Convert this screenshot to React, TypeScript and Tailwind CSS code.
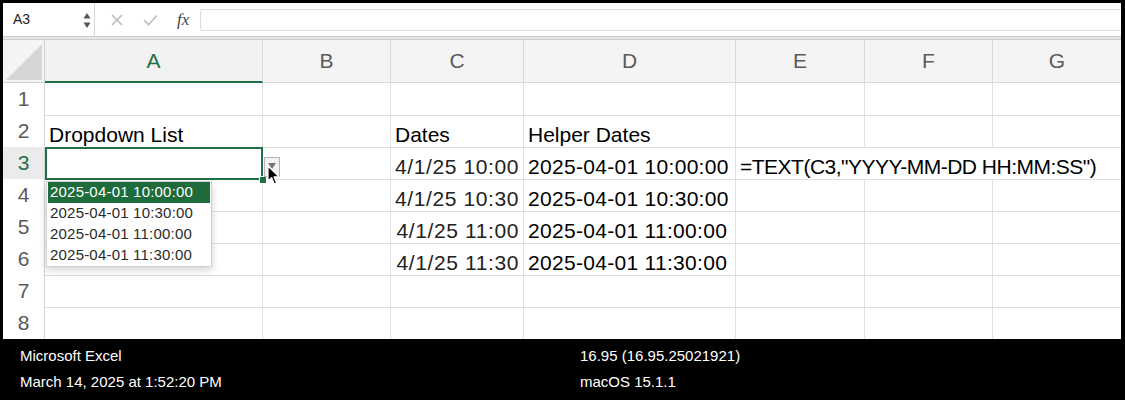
import * as React from 'react';

const COLS = 'grid grid-cols-[42px_218px_128px_133px_212px_129px_128px_129px]';
const LETTERS = ['A', 'B', 'C', 'D', 'E', 'F', 'G'];

type Cell = { text?: string; align?: 'left' | 'right'; cls?: string; noRight?: boolean };

const dateCell = (text: string): Cell => ({ text, align: 'right', cls: 'tracking-[0.6px]' });
const helperCell = (text: string): Cell => ({ text, cls: 'tracking-[0.3px]' });

const rows: Record<number, Cell[]> = {
  2: [{ text: 'Dropdown List' }, {}, { text: 'Dates' }, { text: 'Helper Dates' }, {}, {}, {}],
  3: [
    {},
    {},
    dateCell('4/1/25 10:00'),
    helperCell('2025-04-01 10:00:00'),
    { text: '=TEXT(C3,"YYYY-MM-DD HH:MM:SS")', cls: 'tracking-[-0.5px]', noRight: true },
    { noRight: true },
    {},
  ],
  4: [{}, {}, dateCell('4/1/25 10:30'), helperCell('2025-04-01 10:30:00'), {}, {}, {}],
  5: [{}, {}, dateCell('4/1/25 11:00'), helperCell('2025-04-01 11:00:00'), {}, {}, {}],
  6: [{}, {}, dateCell('4/1/25 11:30'), helperCell('2025-04-01 11:30:00'), {}, {}, {}],
};

const options = ['2025-04-01 10:00:00', '2025-04-01 10:30:00', '2025-04-01 11:00:00', '2025-04-01 11:30:00'];

function FormulaBar() {
  return (
    <div className="flex items-center h-[34px] border-b border-[#cfcfcf]">
      <div className="relative flex items-center w-[92px] h-full border-r border-[#d9d9d9] pl-[10px] text-[14px] text-[#222]">
        A3
        <svg className="absolute right-[3px] top-[9px]" width="8" height="17" viewBox="0 0 8 17">
          <path d="M4 1 L7.5 6.5 H0.5 Z" fill="#555" />
          <path d="M4 16 L7.5 10.5 H0.5 Z" fill="#555" />
        </svg>
      </div>
      <div className="flex items-center w-[105px] h-full">
        <svg className="ml-[16px]" width="12" height="12" viewBox="0 0 12 12">
          <path d="M1 1 L11 11 M11 1 L1 11" stroke="#bdbdbd" strokeWidth="1.6" />
        </svg>
        <svg className="ml-[20px]" width="15" height="12" viewBox="0 0 15 12">
          <path d="M1 6 L5.5 10.5 L14 1.5" stroke="#bdbdbd" strokeWidth="1.6" fill="none" />
        </svg>
        <span className="ml-[19px] font-['Liberation_Serif',serif] italic text-[17px] text-[#444] leading-none">fx</span>
      </div>
      <div className="flex-1 h-[22px] border border-[#dcdcdc] border-r-0 rounded-l-[3px]" />
    </div>
  );
}

function HeaderRow() {
  return (
    <div className={`${COLS} h-[43px]`}>
      <div className="relative bg-[#f4f4f4] border-r border-b border-[#cfcfcf]">
        <svg className="absolute right-[2px] bottom-[2px]" width="36" height="36" viewBox="0 0 36 36">
          <path d="M36 0 V36 H0 Z" fill="#d6d6d6" />
        </svg>
      </div>
      {LETTERS.map((l) =>
        l === 'A' ? (
          <div key={l} className="flex items-center justify-center bg-[#f2f2f2] border-r border-[#d9d9d9] border-b-2 border-b-[#1e7145] text-[21px] text-[#1e7145]">
            {l}
          </div>
        ) : (
          <div key={l} className="flex items-center justify-center bg-[#f4f4f4] border-r border-b border-[#d9d9d9] text-[21px] text-[#5a5a5a]">
            {l}
          </div>
        ),
      )}
    </div>
  );
}

function GridRow({ n }: { n: number }) {
  const cells = rows[n] ?? [{}, {}, {}, {}, {}, {}, {}];
  const active = n === 3;
  return (
    <div className={`${COLS} h-[32px]`}>
      <div
        className={`flex items-center justify-center border-r border-b border-[#d4d4d4] text-[21px] ${
          active ? 'bg-[#ebebeb] text-[#1e7145]' : 'bg-white text-[#5a5a5a]'
        }`}
      >
        {n}
      </div>
      {cells.map((c, i) => (
        <div
          key={i}
          className={`flex items-end pb-[2px] px-[4px] border-b border-[#e0e0e0] text-[21px] leading-none text-black whitespace-nowrap ${
            c.noRight ? '' : 'border-r'
          } ${c.align === 'right' ? 'justify-end' : 'justify-start'} ${c.cls ?? ''}`}
        >
          {c.text ? <span className={c.align === 'right' ? 'text-[#222]' : ''}>{c.text}</span> : null}
        </div>
      ))}
    </div>
  );
}

function Dropdown() {
  return (
    <div className="absolute left-[43px] top-[178px] w-[166px] bg-white border border-[#cfcfcf] shadow-[0_3px_8px_rgba(0,0,0,0.18)] px-[1px]">
      {options.map((o, i) => (
        <div
          key={o}
          className={`h-[21px] flex items-center pl-[2px] text-[15px] tracking-[0.2px] ${i === 0 ? 'bg-[#1e6b3b] text-white' : 'text-[#2a2a2a]'}`}
        >
          {o}
        </div>
      ))}
    </div>
  );
}

export default function App() {
  return (
    <div className="w-[1125px] h-[400px] bg-black flex flex-col pt-[3px] pl-[3px] pr-[4px] font-['Liberation_Sans',Arial,sans-serif]">
      <div className="relative flex flex-col h-[336px] bg-white overflow-hidden">
        <FormulaBar />
        <div className="h-[3px] bg-[#e6e6e6] border-b border-[#cfcfcf]" />
        <HeaderRow />
        {[1, 2, 3, 4, 5, 6, 7, 8].map((n) => (
          <GridRow key={n} n={n} />
        ))}

        {/* selected cell A3 */}
        <div className="absolute left-[42px] top-[144px] w-[218px] h-[33px] border-2 border-[#1e7145]" />
        <div className="absolute left-[257px] top-[174px] w-[6px] h-[6px] bg-[#1e7145] outline outline-1 outline-white" />

        {/* dropdown button */}
        <div className="absolute left-[261px] top-[154px] w-[16px] h-[20px] bg-[#f3f3f3] border border-[#b5b5b5] flex items-start justify-center pt-[5px]">
          <svg width="8" height="6" viewBox="0 0 8 6">
            <path d="M0 0 H8 L4 6 Z" fill="#777" />
          </svg>
        </div>

        <Dropdown />

        {/* mouse pointer */}
        <svg className="absolute left-[264px] top-[162px]" width="13" height="21" viewBox="0 0 13 21">
          <path
            d="M1 1 L1 16 L4.6 12.6 L7.2 19 L9.6 18 L7 11.8 L12 11.8 Z"
            fill="#000"
            stroke="#fff"
            strokeWidth="1.2"
            strokeLinejoin="round"
          />
        </svg>
      </div>

      <footer className="flex-1 flex pt-[4px] text-[15px] leading-[26px] text-white">
        <div className="w-[577px] pl-[17px]">
          <div>Microsoft Excel</div>
          <div>March 14, 2025 at 1:52:20 PM</div>
        </div>
        <div>
          <div>16.95 (16.95.25021921)</div>
          <div>macOS 15.1.1</div>
        </div>
      </footer>
    </div>
  );
}
